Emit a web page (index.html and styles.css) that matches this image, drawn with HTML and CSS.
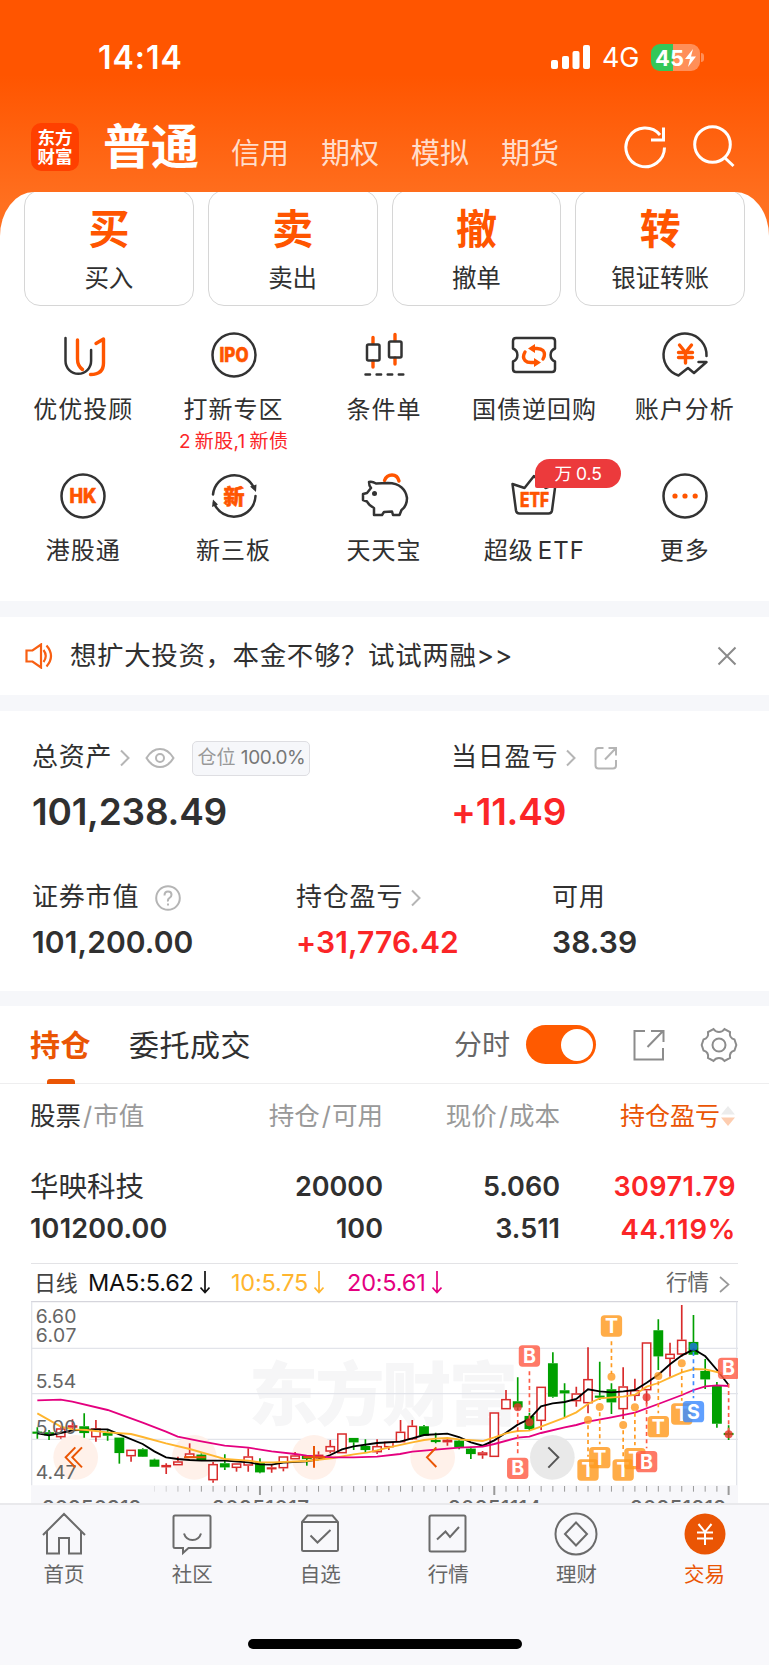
FILE: index.html
```html
<!DOCTYPE html>
<html lang="zh-CN">
<head>
    <meta charset="UTF-8">
    <meta name="viewport" content="width=device-width, initial-scale=1.0">
    <title>交易</title>
    <link rel="stylesheet" href="styles.css">
</head>
<body>

    <header class="header">
        <div class="status-bar">
            <span class="time">14:14</span>
            <svg class="signal" width="40" height="25" viewBox="0 0 40 25" fill="#fff">
                <rect x="0" y="15" width="7" height="9" rx="2"/>
                <rect x="11" y="11" width="7" height="13" rx="2"/>
                <rect x="21.500" y="6" width="7" height="18" rx="2"/>
                <rect x="32" y="0" width="7" height="24" rx="2"/>
            </svg>
            <span class="network">4G</span>
            <span class="battery">45<svg width="11" height="18" viewBox="0 0 11 18"><path d="M8 0 0 10h5L3 18l8-10.500H6z" fill="#fff"/></svg></span>
            <span class="battery-cap"></span>
        </div>
        <div class="top-nav">
            <div class="logo"><span>东方</span><span>财富</span></div>
            <nav class="accounts">
                <span class="active">普通</span>
                <span>信用</span>
                <span>期权</span>
                <span>模拟</span>
                <span>期货</span>
            </nav>
            <svg class="refresh" width="44" height="44" viewBox="0 0 44 44" fill="none" stroke="#fff" stroke-width="3">
                <path d="M41.500 22.500A19.300 19.300 0 1 1 37 10"/>
                <path d="M40.500 2.500v12.500H28"/>
            </svg>
            <svg class="search" width="44" height="44" viewBox="0 0 44 44" fill="none" stroke="#fff" stroke-width="3">
                <circle cx="20.500" cy="20.500" r="17.800"/>
                <path d="M32.500 33.500 41.500 42"/>
            </svg>
        </div>
    </header>

    <main class="sheet">
        <section class="actions">
            <div class="action"><b>买</b><span>买入</span></div>
            <div class="action"><b>卖</b><span>卖出</span></div>
            <div class="action"><b>撤</b><span>撤单</span></div>
            <div class="action"><b>转</b><span>银证转账</span></div>
        </section>

        <section class="menu">
            <div class="menu-item">
                <svg viewBox="0 0 50 50">
                    <path d="M7.500 8v23a12.800 12.800 0 0 0 25.600 0V20"/>
                    <path class="hot" d="M19.500 10v19q0 7 5 10.500M38 13.500l7.500-4.500v24q0 11.500-13 11.500"/>
                </svg>
                <span>优优投顾</span>
            </div>
            <div class="menu-item">
                <svg viewBox="0 0 50 50"><circle cx="25" cy="25" r="21.500"/><text x="25" y="32" font-size="19.500" textLength="29" lengthAdjust="spacingAndGlyphs">IPO</text></svg>
                <span>打新专区</span>
                <small>2<i></i>新股,1<i></i>新债</small>
            </div>
            <div class="menu-item">
                <svg viewBox="0 0 50 50">
                    <path class="hot" d="M14 7.500v6M14 31v6M36 4.500v6M36 28v6"/>
                    <rect x="8" y="14.500" width="12.500" height="16" rx="1.500"/>
                    <rect x="30" y="11.500" width="12.500" height="16" rx="1.500"/>
                    <path d="M6.500 44.500h38" stroke-dasharray="4.500 6.600"/>
                </svg>
                <span>条件单</span>
            </div>
            <div class="menu-item">
                <svg viewBox="0 0 50 50">
                    <path d="M7 8h36q3 0 3 3v7.500a7 7 0 0 0 0 13V39q0 3-3 3H7q-3 0-3-3v-7.500a7 7 0 0 0 0-13V11q0-3 3-3z"/>
                    <path class="hot" d="M16 22q-3 5 0 8.500 2 2 6 2h5M34 29q3-5 0-8.500-2-2-6-2h-5"/>
                    <path class="hot-fill" d="M25 28l7 4.500-7 4.500zM26 14l-7 4.500 7 4.500z"/>
                </svg>
                <span>国债逆回购</span>
            </div>
            <div class="menu-item">
                <svg viewBox="0 0 50 50">
                    <path d="M46.500 26A21.500 21.500 0 1 0 18.500 45.500L28 38l6 5 12.500-11h-8"/>
                    <path class="hot" d="M19.500 15l6 7.500 6-7.500M25.500 22v11M18.500 22.500h14M18.500 27.500h14"/>
                </svg>
                <span>账户分析</span>
            </div>
            <div class="menu-item">
                <svg viewBox="0 0 50 50"><circle cx="25" cy="25" r="21.500"/><text x="25" y="32" font-size="20" textLength="27" lengthAdjust="spacingAndGlyphs">HK</text></svg>
                <span>港股通</span>
            </div>
            <div class="menu-item">
                <svg viewBox="0 0 50 50">
                    <path d="M4 23.500A21.500 21.500 0 0 1 45 17M46.500 25A21.500 21.500 0 0 1 5 32"/>
                    <path class="dark-fill" d="M41 15.500l6.500-2-.500 7.500zM3 36l1-7.500 5 5z"/>
                    <text x="25" y="32.500" font-size="21">新</text>
                </svg>
                <span>新三板</span>
            </div>
            <div class="menu-item">
                <svg viewBox="0 0 50 50">
                    <path class="hot" d="M25.500 9.500q2-5.500 7.500-5.500t7 6"/>
                    <path d="M17 12.500q-4-2.500-7-1.500 0 4 2 6l-4 5-4 1v6l4 1.500q2 4 7 6.500V44h8l2-3 8-.500 1 3.500h6.500l2-5q5.500-4 5.500-12C47 19 41 12 29 12z"/>
                    <circle class="dark-fill" cx="15.500" cy="22.500" r="2.500"/>
                </svg>
                <span>天天宝</span>
            </div>
            <div class="menu-item">
                <svg viewBox="0 0 50 50">
                    <path d="M3.500 13 7 39.500q.500 3 3.500 3h29q3 0 3.500-3L46.500 13 36.500 17 25 5 15.500 17z"/>
                    <text x="25.500" y="36" font-size="19.500" textLength="29" lengthAdjust="spacingAndGlyphs">ETF</text>
                </svg>
                <span>超级<i></i>ETF</span>
                <em class="badge">万<i></i>0.5</em>
            </div>
            <div class="menu-item">
                <svg viewBox="0 0 50 50"><circle cx="25" cy="25" r="21.500"/><path class="hot-fill" d="M12.400 25a2.600 2.600 0 1 0 5.200 0a2.600 2.600 0 1 0-5.200 0M22.400 25a2.600 2.600 0 1 0 5.200 0a2.600 2.600 0 1 0-5.200 0M32.600 25a2.600 2.600 0 1 0 5.200 0a2.600 2.600 0 1 0-5.200 0"/></svg>
                <span>更多</span>
            </div>
        </section>
    </main>

    <section class="notice">
        <svg width="28" height="26" viewBox="0 0 28 26" fill="none" stroke="#f85f12" stroke-width="2.200">
            <path d="M1.500 7.500h6L16 1.500v23L7.500 18.500h-6z"/>
            <path d="M18.500 7q4.500 6 0 12M21.500 2.500q9 10.500 0 21"/>
        </svg>
        <p>想扩大投资，本金不够？试试两融&gt;&gt;</p>
        <svg class="close" width="20" height="20" viewBox="0 0 20 20" stroke="#8a8a8a" stroke-width="2"><path d="M1.500 1.500l17 17M18.500 1.500l-17 17"/></svg>
    </section>

    <section class="assets">
        <div class="asset total">
            <div class="label"><span>总资产</span>
                <svg class="arrow" width="10" height="18" viewBox="0 0 10 18"><path d="M1 1.500 8.500 9 1 16.500"/></svg>
                <svg class="eye" width="30" height="22" viewBox="0 0 30 22"><path d="M1.500 11Q7 2 15 2t13.500 9Q23 20 15 20T1.500 11z"/><circle cx="15" cy="11" r="4"/></svg>
                <em class="tag">仓位 <b>100.0%</b></em>
            </div>
            <strong>101,238.49</strong>
        </div>
        <div class="asset today">
            <div class="label"><span>当日盈亏</span>
                <svg class="arrow" width="10" height="18" viewBox="0 0 10 18"><path d="M1 1.500 8.500 9 1 16.500"/></svg>
                <svg class="share" width="24" height="24" viewBox="0 0 24 24"><path d="M9.500 2H4.500Q1.500 2 1.500 5v14.500q0 3 3 3h14.500q3 0 3-3V14M14.500 2h7.500v7.500M22 2 11 13.500"/></svg>
            </div>
            <strong class="red">+11.49</strong>
        </div>
        <div class="asset small">
            <div class="label"><span>证券市值</span>
                <svg class="help" width="26" height="26" viewBox="0 0 26 26"><circle cx="13" cy="13" r="11.800"/><path d="M9.500 10.500q0-4 3.500-4t3.500 3.300q0 2-2 3.200T13 16.500M13 18.500v2"/></svg>
            </div>
            <strong>101,200.00</strong>
        </div>
        <div class="asset small">
            <div class="label"><span>持仓盈亏</span>
                <svg class="arrow" width="10" height="18" viewBox="0 0 10 18"><path d="M1 1.500 8.500 9 1 16.500"/></svg>
            </div>
            <strong class="red">+31,776.42</strong>
        </div>
        <div class="asset small">
            <div class="label"><span>可用</span></div>
            <strong>38.39</strong>
        </div>
    </section>

    <section class="positions">
        <div class="tabs">
            <span class="tab active">持仓</span>
            <span class="tab">委托成交</span>
            <span class="switch-label">分时</span>
            <span class="switch"></span>
            <svg class="open" width="32" height="32" viewBox="0 0 32 32"><path d="M12 2H1.500v28.500H30V19M18 2h12.500v11M30 2 14.500 18"/></svg>
            <svg class="gear" width="38" height="36" viewBox="0 0 38 36"><path d="M13.500 2q2 3 5.500 3t5.500-3l5.500 3q-1 6 4.500 7.500l1.800 5.500-1.800 5.500Q29 25 30 31l-5.500 3q-2-3-5.500-3t-5.500 3L8 31q1-6-4.500-7.500L1.700 18l1.800-5.500Q9 11 8 5z"/><circle cx="19" cy="18" r="6.500"/></svg>
        </div>

        <div class="table">
            <div class="row head">
                <span><b>股票</b><i>/</i>市值</span>
                <span>持仓<i>/</i>可用</span>
                <span>现价<i>/</i>成本</span>
                <span class="sorted">持仓盈亏<svg width="16" height="22" viewBox="0 0 16 22"><path d="M8 1l7 8.500H1z" fill="#ececec"/><path d="M8 21l7-8.500H1z" fill="#fdcdb0"/></svg></span>
            </div>
            <div class="row">
                <span class="name">华映科技</span><span>20000</span><span>5.060</span><span class="red profit">30971.79</span>
            </div>
            <div class="row">
                <span class="value">101200.00</span><span>100</span><span>3.511</span><span class="red profit rate">44.119%</span>
            </div>
        </div>

        <div class="chart-box">
            <div class="legend">
                <span class="period">日线</span>
                <span class="ma5">MA5:5.62<svg width="10" height="23" viewBox="0 0 10 23"><path d="M5 0v21M.500 16.500 5 21.500l4.500-5"/></svg></span>
                <span class="ma10">10:5.75<svg width="10" height="23" viewBox="0 0 10 23"><path d="M5 0v21M.500 16.500 5 21.500l4.500-5"/></svg></span>
                <span class="ma20">20:5.61<svg width="10" height="23" viewBox="0 0 10 23"><path d="M5 0v21M.500 16.500 5 21.500l4.500-5"/></svg></span>
                <span class="quote">行情<svg width="11" height="17" viewBox="0 0 11 17"><path d="M1 1l8.500 7.500L1 16"/></svg></span>
            </div>
            <svg id="chart" width="707" height="202" viewBox="93 153 2121 606"></svg>
        </div>
    </section>

    <footer class="tabbar">
        <div class="tab-links">
            <div>
                <svg viewBox="0 0 44 44"><path d="M1 23 22 2l21 21M5 19.500V41.500h12V26h10v15.500h12V19.500"/></svg>
                <span>首页</span>
            </div>
            <div>
                <svg viewBox="0 0 44 44"><path d="M5 3.500h34q1.500 0 1.500 1.500v29.500q0 1.500-1.500 1.500H18.500L13 41v-5H5q-1.500 0-1.500-1.500V5Q3.500 3.500 5 3.500zM14 21.500q2 6.500 8.500 6.500t8.500-6.500"/></svg>
                <span>社区</span>
            </div>
            <div>
                <svg viewBox="0 0 44 44"><path d="M4 10 9.500 3.500h25L40 10v27.500q0 1.500-1.500 1.500h-33Q4 39 4 37.500zM4 10h36M12.500 23.500l7 7L32.500 18"/></svg>
                <span>自选</span>
            </div>
            <div>
                <svg viewBox="0 0 44 44"><path d="M5 3.500h33q1.500 0 1.500 1.500v33q0 1.500-1.500 1.500H5q-1.500 0-1.500-1.500V5Q3.500 3.500 5 3.500zM11 27.500l8.500-8 4.500 5.500L33 15"/></svg>
                <span>行情</span>
            </div>
            <div>
                <svg viewBox="0 0 44 44"><circle cx="22" cy="22" r="20.500"/><path d="M22 10.500 33 22 22 33.500 11 22z"/></svg>
                <span>理财</span>
            </div>
            <div class="active">
                <svg viewBox="0 0 44 44"><circle cx="22" cy="22" r="20.500"/><path d="M15.500 12 22 20l6.500-8M22 20v13M14 20.500h16M14 26.500h16"/></svg>
                <span>交易</span>
            </div>
        </div>
        <div class="home-indicator"></div>
    </footer>

    <script src="chart.js"></script>
</body>
</html>
```
FILE: styles.css
```css
* {
    box-sizing: border-box;
}
body {
    margin: 0;
    width: 769px;
    height: 1665px;
    overflow: hidden;
    background: #f6f7fa;
    color: #303030;
    font-family: Inter, "Noto Sans CJK SC", sans-serif;
}
svg {
    display: block;
    flex: none;
}
.red {
    color: #fb2527;
}

/* header */
.header {
    height: 240px;
    background: linear-gradient(#ff5500 75px, #ff7020 205px);
    color: #fff;
}
.status-bar {
    display: flex;
    align-items: center;
    height: 115px;
    padding-left: 98px;
}
.time {
    width: 453px;
    font-size: 32px;
    font-weight: 600;
    letter-spacing: 1px;
}
.signal {
    margin-right: 11px;
}
.network {
    width: 49px;
    font-size: 27px;
    letter-spacing: -0.3px;
}
.battery {
    display: flex;
    align-items: center;
    gap: 1px;
    width: 49px;
    height: 27px;
    padding-left: 4px;
    border-radius: 9px;
    background: linear-gradient(90deg, #34c759 45%, #ff8f58 45%);
    font-size: 22px;
    font-weight: 700;
}
.battery-cap {
    width: 3px;
    height: 9px;
    margin-left: 1px;
    border-radius: 0 3px 3px 0;
    background: #ff8f58;
}
.top-nav {
    display: flex;
    align-items: flex-start;
    padding: 8px 0 0 31px;
}
.logo {
    display: flex;
    flex-direction: column;
    align-items: center;
    justify-content: center;
    width: 48px;
    height: 48px;
    border-radius: 10px;
    background: #ff4000;
    font-size: 17.500px;
    font-weight: 700;
    line-height: 19px;
}
.accounts {
    display: flex;
    align-items: baseline;
    gap: 32px;
    width: 546px;
    padding-left: 24px;
    font-size: 29px;
    line-height: 48px;
    color: rgba(255, 255, 255, 0.8);
}
.accounts .active {
    font-size: 48px;
    font-weight: 700;
    color: #fff;
}
.refresh {
    margin: 2px 25px 0 -2px;
}
.search {
    margin-top: 1px;
}

/* quick actions */
.sheet {
    height: 409px;
    margin-top: -48px;
    overflow: hidden;
    border-radius: 34px 34px 0 0 / 44px 44px 0 0;
    background: #fff;
}
.actions {
    display: grid;
    grid-template-columns: repeat(4, 1fr);
    gap: 14px;
    margin-top: -2px;
    padding: 0 24px;
}
.action {
    display: flex;
    flex-direction: column;
    align-items: center;
    height: 116px;
    padding-top: 14px;
    border: 1.500px solid #d6d6d6;
    border-radius: 16px;
}
.action b {
    color: #ff5500;
    font-size: 41px;
    line-height: 48px;
}
.action span {
    margin-top: 9px;
    font-size: 24.500px;
    line-height: 32px;
}
.menu {
    display: grid;
    grid-template-columns: repeat(5, 1fr);
    grid-template-rows: 141px 120px;
    padding: 24px 9px 0 8px;
}
.menu-item {
    position: relative;
    display: flex;
    flex-direction: column;
    align-items: center;
}
.menu-item svg {
    width: 50px;
    height: 50px;
    fill: none;
    stroke: #333;
    stroke-width: 2.500;
    stroke-linecap: round;
    stroke-linejoin: round;
}
.menu-item svg .hot {
    stroke: #ff5500;
    stroke-width: 3.400;
}
.menu-item svg .hot-fill {
    fill: #ff5500;
    stroke: none;
}
.menu-item svg .dark-fill {
    fill: #333;
    stroke: none;
}
.menu-item svg text {
    fill: #ff5500;
    stroke: #ff5500;
    stroke-width: 0.600;
    font-weight: 800;
    text-anchor: middle;
}
.menu-item span {
    margin-top: 14px;
    font-size: 24px;
    line-height: 32px;
    letter-spacing: 1px;
    white-space: nowrap;
}
.menu-item i {
    display: inline-block;
    width: 4px;
}
.menu-item small {
    margin-top: 4px;
    color: #fb2527;
    font-size: 19px;
    line-height: 24px;
    letter-spacing: 0.300px;
    white-space: nowrap;
}
.badge {
    position: absolute;
    top: -12px;
    left: 76px;
    width: 86px;
    height: 29px;
    border-radius: 15px 15px 15px 2px;
    background: #ec3a3c;
    color: #fff;
    font-size: 17.500px;
    font-style: normal;
    line-height: 29px;
    text-align: center;
}

/* notice */
.notice {
    display: flex;
    align-items: center;
    height: 78px;
    margin-top: 16px;
    padding: 0 32px 0 25px;
    background: #fff;
}
.notice p {
    flex: 1;
    margin: 0 0 2px 17px;
    font-size: 26.500px;
    line-height: 36px;
    letter-spacing: 0.600px;
}

/* assets */
.assets {
    display: grid;
    grid-template-columns: 264px 155px 101px auto;
    grid-template-rows: 141px 139px;
    height: 280px;
    margin-top: 16px;
    padding-left: 32px;
    background: #fff;
}
.total {
    grid-column: 1 / 3;
}
.today {
    grid-column: 3 / 5;
}
.small:last-child {
    grid-column: 4;
}
.small:nth-child(4) {
    grid-column: 2 / 4;
}
.label {
    display: flex;
    align-items: center;
    height: 36px;
    margin-top: 29px;
    font-size: 26px;
    letter-spacing: 0.800px;
}
.label span {
    height: 36px;
    line-height: 34px;
}
.small .label {
    margin-top: 28px;
}
.label svg {
    fill: none;
    stroke: #b5b5b5;
    stroke-width: 2;
}
.label .arrow {
    margin-left: 8px;
}
.label .eye {
    margin-left: 15px;
}
.label .share {
    margin-left: 18px;
}
.label .help {
    margin-left: 16px;
}
.tag {
    width: 118px;
    height: 35px;
    margin-left: 17px;
    border: 1.500px solid #dedee2;
    border-radius: 5px;
    background: #f6f7fa;
    color: #999;
    font-size: 19px;
    font-style: normal;
    line-height: 32px;
    letter-spacing: 0;
    text-align: center;
    white-space: nowrap;
}
.tag b {
    color: #777;
    font-weight: 400;
    letter-spacing: -0.400px;
}
.asset strong {
    display: block;
    font-weight: 600;
}
.total strong,
.today strong {
    margin-top: 14px;
    font-size: 37px;
    line-height: 44px;
    letter-spacing: -0.200px;
}
.small strong {
    margin-top: 6px;
    font-size: 30px;
    line-height: 40px;
    letter-spacing: 0.100px;
}

/* positions */
.positions {
    height: 497px;
    margin-top: 15px;
    overflow: hidden;
    background: #fff;
}
.tabs {
    display: flex;
    align-items: center;
    height: 78px;
    padding-left: 30px;
    border-bottom: 1.500px solid #eeeeef;
}
.tab {
    position: relative;
    margin-right: 38px;
    font-size: 30px;
    line-height: 78px;
    letter-spacing: 0.500px;
}
.tab.active {
    color: #ea5504;
    font-weight: 600;
}
.tab.active::after {
    content: "";
    position: absolute;
    left: 17px;
    bottom: 0;
    width: 28px;
    height: 5px;
    border-radius: 3px 3px 0 0;
    background: #ea5504;
}
.switch-label {
    width: 72px;
    margin-left: 165px;
    color: #666;
    font-size: 28px;
    line-height: 78px;
    white-space: nowrap;
}
.switch {
    display: flex;
    justify-content: flex-end;
    width: 70px;
    height: 39px;
    padding: 3.500px;
    border-radius: 20px;
    background: #ff5a00;
}
.switch::after {
    content: "";
    width: 32px;
    height: 32px;
    border-radius: 50%;
    background: #fff;
}
.open,
.gear {
    fill: none;
    stroke: #8c8c8c;
    stroke-width: 2;
}
.open {
    margin: 0 35px 0 37px;
}
.table {
    height: 179px;
    padding-top: 11px;
}
.row {
    display: grid;
    grid-template-columns: 150px 203px 177px 176px;
    margin-left: 30px;
    font-size: 27px;
    font-weight: 600;
    line-height: 42px;
    text-align: right;
    white-space: nowrap;
}
.row span:first-child {
    text-align: left;
}
.row .name {
    font-size: 28.500px;
    font-weight: 400;
}
.row .value {
    letter-spacing: 0.200px;
}
.row .profit {
    letter-spacing: 0.400px;
}
.row .rate {
    font-size: 27.500px;
    letter-spacing: 0.700px;
}
.row.head {
    margin-bottom: 29px;
    color: #999;
    font-size: 25.500px;
    font-weight: 400;
}
.head b {
    color: #303030;
    font-weight: 400;
}
.head i {
    padding: 0 1px 0 2px;
    font-style: normal;
}
.head .sorted {
    display: flex;
    align-items: center;
    justify-content: flex-end;
    color: #ea5504;
    font-size: 25px;
}
.chart-box {
    width: 707px;
    margin-left: 31px;
    border-top: 1.500px solid #e3e3e6;
}
.legend {
    display: flex;
    align-items: center;
    height: 37px;
    padding-left: 3px;
    font-size: 23.500px;
    line-height: 37px;
    letter-spacing: -0.200px;
    white-space: nowrap;
}
.legend span {
    display: flex;
    align-items: center;
    gap: 6px;
}
.legend svg {
    fill: none;
    stroke: currentColor;
    stroke-width: 1.700;
}
.legend .period {
    width: 54px;
    height: 38px;
    color: #444;
    font-size: 22px;
    line-height: 34px;
}
.ma5 {
    width: 143px;
    color: #111;
}
.ma10 {
    width: 116px;
    color: #ffb52e;
}
.ma20 {
    color: #e4007f;
}
.legend .quote {
    gap: 10px;
    margin: 0 8px 0 auto;
    color: #666;
    font-size: 21.500px;
    letter-spacing: 0;
}
.legend .quote svg {
    margin-top: 3px;
    stroke: #999;
}

/* bottom tab bar */
.tabbar {
    height: 162px;
    border-top: 2px solid #e9e9ec;
    background: #f8f8fb;
}
.tab-links {
    display: grid;
    grid-template-columns: repeat(6, 128.100px);
    height: 134px;
    padding-top: 7px;
}
.tab-links div {
    display: flex;
    flex-direction: column;
    align-items: center;
    color: #666;
    font-size: 20.500px;
    line-height: 28px;
}
.tab-links svg {
    width: 44px;
    height: 44px;
    margin-bottom: 5px;
    fill: none;
    stroke: #6b6b6b;
    stroke-width: 2;
}
.tab-links .active {
    color: #ea5504;
}
.tab-links .active svg {
    stroke: #fff;
}
.tab-links .active circle {
    fill: #ea5504;
    stroke: none;
}
.home-indicator {
    width: 274px;
    height: 10px;
    margin: 0 auto;
    border-radius: 5px;
    background: #000;
}
```
FILE: chart.js
```js
// [up, wick top, body top, body bottom, wick bottom]
const candles = [
    [0, 532, 545, 551, 566], [0, 540, 547, 556, 570], [1, 530, 535, 562, 566], [1, 508, 526, 533, 540],
    [0, 490, 529, 549, 563], [1, 510, 535, 562, 575], [0, 540, 549, 557, 572], [0, 563, 563, 609, 641],
    [1, 599, 599, 619, 635], [0, 595, 598, 620, 621], [0, 626, 629, 650, 650], [1, 640, 645, 652, 672],
    [1, 620, 634, 646, 646], [1, 580, 610, 623, 623], [0, 610, 614, 630, 630], [1, 636, 642, 691, 698],
    [0, 613, 640, 652, 660], [1, 640, 640, 654, 665], [1, 595, 619, 647, 665], [0, 625, 637, 667, 670],
    [1, 645, 652, 655, 668], [1, 619, 619, 655, 664], [1, 606, 616, 628, 628], [0, 617, 617, 627, 647],
    [1, 604, 614, 625, 625], [1, 570, 588, 605, 610], [1, 550, 550, 610, 610], [0, 564, 564, 577, 600],
    [0, 568, 588, 600, 606], [1, 568, 588, 607, 612], [1, 575, 575, 592, 600], [1, 510, 545, 577, 577],
    [1, 510, 527, 568, 570], [0, 525, 529, 557, 557], [0, 548, 570, 575, 580], [1, 564, 569, 577, 587],
    [0, 568, 572, 592, 598], [0, 590, 596, 612, 627], [1, 603, 607, 616, 626], [1, 487, 487, 621, 621],
    [1, 420, 447, 478, 478], [0, 382, 454, 472, 480], [0, 488, 498, 537, 543], [1, 410, 410, 513, 540],
    [0, 307, 340, 440, 443], [0, 400, 421, 430, 502], [1, 410, 430, 454, 470], [1, 292, 387, 460, 490],
    [0, 335, 437, 441, 450], [0, 400, 418, 457, 492], [1, 352, 409, 478, 507], [1, 386, 420, 438, 452],
    [1, 277, 277, 421, 463], [0, 208, 241, 319, 360], [1, 278, 311, 327, 380], [1, 165, 269, 314, 320],
    [0, 195, 276, 314, 314], [0, 327, 363, 388, 417], [0, 396, 408, 521, 533], [0, 526, 549, 554, 570]
];

const averages = [
    ['#000', '112,550 147,556 182,549 217,541 288,538 323,538 358,553 428,582 463,604 498,622 533,627 569,630 604,632 674,632 745,637 780,643 815,644 850,638 920,634 955,628 991,615 1026,598 1061,589 1131,579 1200,575 1237,565 1272,555 1342,551 1377,561 1413,577 1448,587 1483,571 1518,548 1553,524 1588,507 1623,469 1658,460 1694,456 1729,447 1764,418 1799,424 1834,427 1870,424 1905,420 1940,398 1975,374 2010,343 2046,316 2081,298 2116,319 2151,360 2186,405'],
    ['#ffb52e', '112,490 182,530 217,538 260,540 323,547 393,552 428,561 498,580 569,597 639,617 674,627 745,632 780,637 820,637 920,633 1000,624 1061,613 1100,608 1131,601 1167,592 1237,577 1272,570 1307,566 1342,564 1377,568 1448,573 1483,562 1518,550 1553,543 1588,542 1623,530 1694,503 1729,487 1764,462 1799,445 1870,440 1905,434 1940,410 1975,399 2010,383 2046,367 2081,357 2116,358 2151,366 2186,376'],
    ['#e4007f', '112,451 182,449 217,455 323,480 428,518 498,545 533,560 604,574 674,587 745,593 815,604 885,612 920,617 1000,622 1061,622 1131,620 1200,612 1237,605 1307,599 1377,593 1448,590 1483,582 1553,563 1588,560 1623,549 1694,532 1729,525 1764,515 1834,502 1905,488 1975,462 2046,435 2081,420 2116,409 2151,406 2186,408']
];

// [candle index, letter, badge y, dot y]
const trades = [
    [41, 'B', 655, 472], [42, 'B', 318, 517], [47, 'T', 660, 510], [48, 'T', 623, 471],
    [49, 'T', 228, 380], [50, 'T', 660, 525], [51, 'T', 626, 472], [52, 'B', 635, 442],
    [53, 'T', 530, 378], [55, 'T', 492, 340], [56, 'S', 485, 290], [59, 'B', 355, 553]
];
const colors = { B: '#ff5b45', T: '#ff9a1f', S: '#3d8bff' };
const dots = { B: '#e8322a', T: '#ff9a1f', S: '#1f78e0' };

const x = i => 112 + 35.15 * i;
let svg = '';

svg += '<rect x="93" y="706" width="2121" height="60" fill="#f7f7fa"/>';
svg += '<text x="1150" y="510" font-size="208" font-weight="900" fill="#f6f6f7" text-anchor="middle" textLength="808">东方财富</text>';
[155, 295, 431, 568].forEach((y, i) => {
    svg += `<path d="M93 ${y}H2214" stroke="${i ? '#e2e4ea' : '#d5d5dc'}" stroke-width="4"/>`;
});
svg += '<path d="M95 155V706M2210 155V706" stroke="#e2e4ea" stroke-width="4"/>';

// bottom ruler
for (let i = 10; i < 60; i++) {
    const major = i % 20 === 19;
    svg += `<path d="M${x(i)} 708V${major ? 735 : 725}" stroke="#999" stroke-width="${major ? 6 : 3}" opacity="${Math.min(1, (i - 9) / 5)}"/>`;
}
[['20250912', 126, 298], ['20251017', 636, 291], ['20251114', 1344, 279], ['20251212', 1890, 288]].forEach(([t, left, w]) => {
    svg += `<text x="${left}" y="796" font-size="62" font-weight="500" fill="#666" textLength="${w}">${t}</text>`;
});

[227, 583, 942, 1298].forEach(cx => {
    svg += `<circle cx="${cx}" cy="622" r="67" fill="#fff1ea"/>`;
});

candles.forEach(([up, high, top, bottom, low], i) => {
    const c = up ? '#d92b2b' : '#00a000';
    svg += `<path d="M${x(i)} ${high}V${top}M${x(i)} ${bottom}V${low}" stroke="${c}" stroke-width="5"/>`;
    const h = Math.max(bottom - top - 4, 2);
    svg += `<rect x="${x(i) - 12.5}" y="${top + 2}" width="25" height="${h}" fill="${up ? '#fff' : c}" stroke="${c}" stroke-width="4.500"/>`;
});

averages.forEach(([color, points]) => {
    svg += `<polyline points="${points}" fill="none" stroke="${color}" stroke-width="5.500"/>`;
});

trades.forEach(([i, letter, y, dot]) => {
    const down = y > dot;
    svg += `<path d="M${x(i)} ${down ? dot + 16 : y + 46}V${down ? y - 40 : dot - 8}" stroke="${colors[letter]}" stroke-width="5" stroke-dasharray="12 10"/>`;
    svg += `<circle cx="${x(i)}" cy="${dot}" r="12" fill="${dots[letter]}" opacity="0.8"/>`;
    svg += `<rect x="${x(i) - 32}" y="${y - 32}" width="64" height="64" rx="11" fill="${colors[letter]}" opacity="0.82"/>`;
    svg += `<text x="${x(i)}" y="${y + 21}" font-size="59" font-weight="700" fill="#fff" text-anchor="middle">${letter}</text>`;
});

[['6.60', 219], ['6.07', 275], ['5.54', 413], ['5.00', 551], ['4.47', 688]].forEach(([t, y]) => {
    svg += `<text x="107" y="${y}" font-size="58" fill="#666" textLength="122">${t}</text>`;
});

// zoom and scroll buttons
svg += '<circle cx="1657" cy="622" r="67" fill="#e5e5e5" opacity="0.85"/>';
svg += '<g fill="none" stroke="#ea5504" stroke-width="6"><path d="M226 592L197 622L226 652M246 592L217 622L246 652"/><path d="M552 622H617M910 622H975M942 588V653"/><path d="M1309 592L1281 622L1309 651"/></g>';
svg += '<path d="M1645 592L1675 622L1645 653" fill="none" stroke="#555" stroke-width="6"/>';

document.getElementById('chart').innerHTML = svg;
```
